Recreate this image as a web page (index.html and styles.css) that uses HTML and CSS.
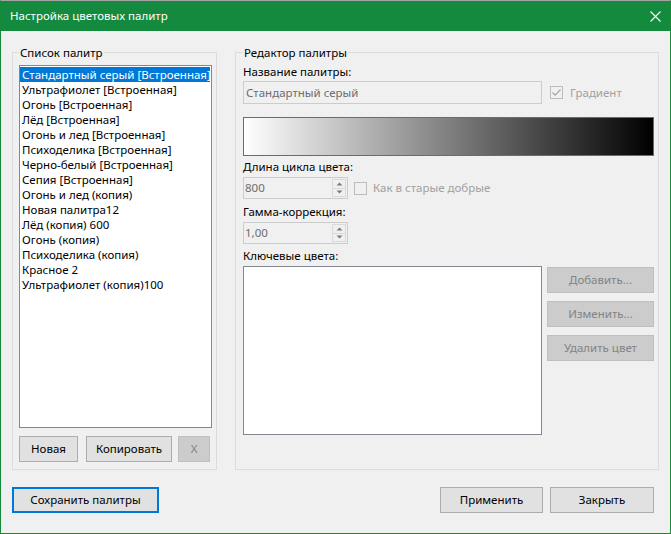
FILE: index.html
```html
<!DOCTYPE html>
<html lang="ru">
<head>
<meta charset="utf-8">
<title>Настройка цветовых палитр</title>
<link rel="stylesheet" href="styles.css">
</head>
<body>
<div class="window">
  <div class="titlebar">
    <span class="title">Настройка цветовых палитр</span>
    <svg class="close" width="11" height="11" viewBox="0 0 11 11"><path d="M0.5 0.5 L10.5 10.5 M10.5 0.5 L0.5 10.5" stroke="#fff" stroke-width="1.1" fill="none"/></svg>
  </div>
  <div class="client">
    <div class="groups">
      <fieldset class="group group-list">
        <legend>Список палитр</legend>
        <ul class="listbox">
          <li class="selected">Стандартный серый [Встроенная]</li>
          <li>Ультрафиолет [Встроенная]</li>
          <li>Огонь [Встроенная]</li>
          <li>Лёд [Встроенная]</li>
          <li>Огонь и лед [Встроенная]</li>
          <li>Психоделика [Встроенная]</li>
          <li>Черно-белый [Встроенная]</li>
          <li>Сепия [Встроенная]</li>
          <li>Огонь и лед (копия)</li>
          <li>Новая палитра12</li>
          <li>Лёд (копия) 600</li>
          <li>Огонь (копия)</li>
          <li>Психоделика (копия)</li>
          <li>Красное 2</li>
          <li>Ультрафиолет (копия)100</li>
        </ul>
        <div class="list-buttons">
          <button class="btn btn-new">Новая</button>
          <button class="btn btn-copy">Копировать</button>
          <button class="btn btn-del" disabled>X</button>
        </div>
      </fieldset>
      <fieldset class="group group-editor">
        <legend>Редактор палитры</legend>
        <div class="label first">Название палитры:</div>
        <div class="row row-name">
          <input class="edit" type="text" value="Стандартный серый" disabled>
          <span class="check checked">
            <svg width="11" height="11" viewBox="0 0 11 11"><path d="M1.5 5.5 L4.2 8.2 L9.5 2.5" stroke="#a8a8a8" stroke-width="1.2" fill="none"/></svg>
          </span>
          <span class="check-label">Градиент</span>
        </div>
        <div class="gradient"></div>
        <div class="label l2">Длина цикла цвета:</div>
        <div class="row row-spin">
          <div class="spin">
            <span class="spin-val">800</span>
            <span class="spin-btns">
              <span class="spin-up"><svg width="7" height="4" viewBox="0 0 7 4"><path d="M0.5 3.5 L3.5 0.5 L6.5 3.5 Z" fill="#7a7a7a"/></svg></span>
              <span class="spin-down"><svg width="7" height="4" viewBox="0 0 7 4"><path d="M0.5 0.5 L3.5 3.5 L6.5 0.5 Z" fill="#7a7a7a"/></svg></span>
            </span>
          </div>
          <span class="check check-old"></span>
          <span class="check-label label-old">Как в старые добрые</span>
        </div>
        <div class="label l3">Гамма-коррекция:</div>
        <div class="row row-spin2">
          <div class="spin">
            <span class="spin-val">1,00</span>
            <span class="spin-btns">
              <span class="spin-up"><svg width="7" height="4" viewBox="0 0 7 4"><path d="M0.5 3.5 L3.5 0.5 L6.5 3.5 Z" fill="#7a7a7a"/></svg></span>
              <span class="spin-down"><svg width="7" height="4" viewBox="0 0 7 4"><path d="M0.5 0.5 L3.5 3.5 L6.5 0.5 Z" fill="#7a7a7a"/></svg></span>
            </span>
          </div>
        </div>
        <div class="label l4">Ключевые цвета:</div>
        <div class="row row-keys">
          <div class="keybox"></div>
          <div class="key-buttons">
            <button class="btn btn-key" disabled>Добавить...</button>
            <button class="btn btn-key" disabled>Изменить...</button>
            <button class="btn btn-key" disabled>Удалить цвет</button>
          </div>
        </div>
      </fieldset>
    </div>
    <div class="footer">
      <button class="btn btn-save">Сохранить палитры</button>
      <div class="footer-right">
        <button class="btn btn-apply">Применить</button>
        <button class="btn btn-close">Закрыть</button>
      </div>
    </div>
  </div>
</div>
</body>
</html>
```
FILE: styles.css
```css
* { box-sizing: border-box; }

body {
  margin: 0;
  font-family: "Noto Sans", "Open Sans", sans-serif;
  font-size: 11.5px;
  color: #000;
  background: #f0f0f0;
}

.window {
  width: 671px;
  height: 534px;
  border: 1px solid #158a3f;
  border-top-color: #a4a4a4;
  background: #f0f0f0;
  display: flex;
  flex-direction: column;
}

.titlebar {
  height: 30px;
  background: #138a3d;
  color: #fff;
  display: flex;
  align-items: center;
  justify-content: space-between;
  padding: 0 9px 0 9px;
}

.title { line-height: 16px; }

.client {
  flex: 1;
  padding: 13px 11px 0 11px;
}

.groups {
  display: flex;
  gap: 18px;
  height: 426px;
}

.group {
  margin: 0;
  height: 426px;
  min-width: 0;
  border: 1px solid #dcdcdc;
  padding: 4px 4px 0 6px;
}

.group legend {
  padding: 0 1px;
  line-height: 17px;
}

.group-list { width: 205px; }

.group-editor {
  width: 424px;
  padding: 3px 4px 0 7px;
}

/* list */
.listbox {
  list-style: none;
  margin: 0;
  padding: 1px 0;
  width: 193px;
  height: 363px;
  background: #fff;
  border: 1px solid #828790;
  overflow: hidden;
}

.listbox li {
  line-height: 15px;
  height: 15px;
  padding-left: 2px;
  white-space: nowrap;
}

.listbox li.selected {
  background: #0078d7;
  color: #fff;
  margin-right: 1px;
}

.list-buttons {
  display: flex;
  margin-top: 8px;
}

.btn {
  height: 26px;
  padding: 0 0 1px 0;
  border: 1px solid #adadad;
  background: #e1e1e1;
  font: inherit;
  color: #000;
}

.btn:disabled {
  background: #cccccc;
  border-color: #bfbfbf;
  color: #838383;
}

.btn-new { width: 59px; }
.btn-copy { width: 86px; margin-left: 8px; }
.btn-del { width: 32px; margin-left: 6px; }

/* editor */
.label { line-height: 16px; }
.label.l2 { margin-top: 3px; }
.label.l3 { margin-top: 5px; }
.label.l4 { margin-top: 4px; }

.row { display: flex; align-items: center; }

.row-name { margin-top: 1px; }

.edit {
  width: 299px;
  height: 23px;
  margin: 0;
  border: 1px solid #cccccc;
  background: #f0f0f0;
  color: #6d6d6d;
  font: inherit;
  padding: 0 0 0 2px;
}

.check {
  width: 13px;
  height: 13px;
  border: 1px solid #bcbcbc;
  background: #f0f0f0;
  display: flex;
  align-items: center;
  justify-content: center;
  flex: none;
}

.row-name .check { margin-left: 8px; }

.check-label {
  margin-left: 7px;
  color: #a0a0a0;
  line-height: 16px;
}

.gradient {
  margin-top: 13px;
  width: 411px;
  height: 39px;
  border: 1px solid #6b6b6b;
  background: linear-gradient(to right, #ffffff, #000000);
}

.row-spin, .row-spin2 { margin-top: 2px; }

.spin {
  width: 105px;
  height: 22px;
  border: 1px solid #cccccc;
  background: #f0f0f0;
  display: flex;
  align-items: stretch;
}

.spin-val {
  flex: 1;
  color: #6d6d6d;
  line-height: 20px;
  padding-left: 1px;
}

.spin-btns {
  width: 14px;
  margin: 1px 1px 1px 0;
  display: flex;
  flex-direction: column;
  border: 1px solid #dadada;
}

.spin-up, .spin-down {
  flex: 1;
  display: flex;
  align-items: center;
  justify-content: center;
}

.spin-up { border-bottom: 1px solid #dadada; }

.check-old { margin-left: 6px; }
.label-old { margin-left: 6px; }

.row-keys {
  margin-top: 2px;
  align-items: flex-start;
}

.keybox {
  width: 299px;
  height: 169px;
  background: #fff;
  border: 1px solid #828790;
}

.key-buttons {
  margin-left: 5px;
  padding-top: 1px;
  display: flex;
  flex-direction: column;
  gap: 8px;
}

.btn-key { width: 107px; }

/* footer */
.footer {
  margin-top: 17px;
  display: flex;
  justify-content: space-between;
  padding-right: 5px;
}

.btn-save {
  width: 147px;
  border: 2px solid #0078d7;
}

.footer-right { display: flex; gap: 7px; }
.btn-apply { width: 103px; }
.btn-close { width: 104px; }
```
